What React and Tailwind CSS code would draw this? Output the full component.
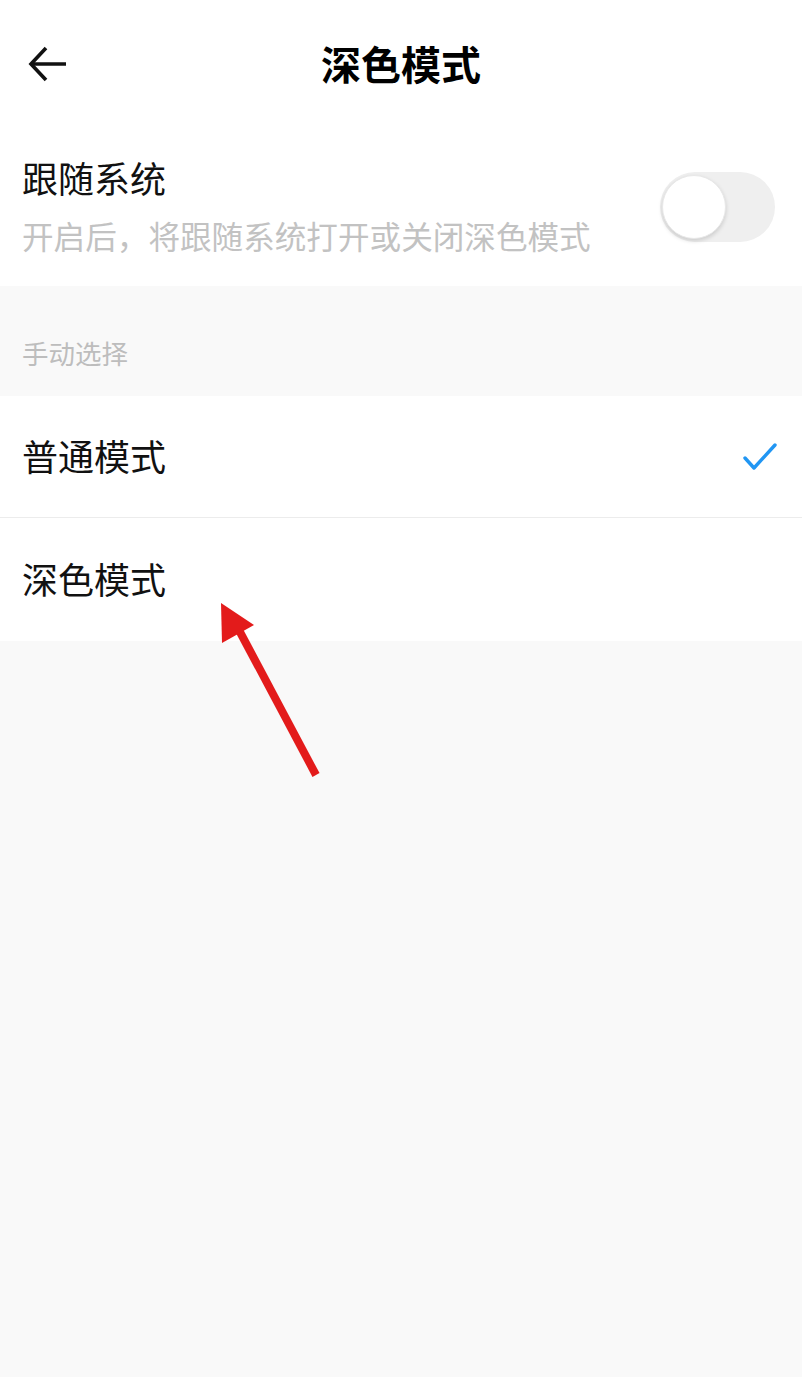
import React from "react";

export default function App() {
  return (
    <div
      className="relative w-[802px] h-[1377px] bg-[#f9f9f9] overflow-hidden"
      style={{ fontFamily: '"Noto Sans CJK SC", "Noto Sans", sans-serif' }}
    >
      {/* Header */}
      <div className="relative h-[130px] bg-white flex items-center justify-center">
        <svg
          className="absolute left-[28px] top-[46px]"
          width="40"
          height="36"
          viewBox="0 0 40 36"
          fill="none"
          stroke="#111"
          strokeWidth="3.6"
          strokeLinecap="butt"
          strokeLinejoin="miter"
        >
          <path d="M38 18 H3" />
          <path d="M18 2 L3 18 L18 34" />
        </svg>
        <div className="text-[40px] font-bold text-black leading-none -mt-[4px]">深色模式</div>
      </div>

      {/* Follow system */}
      <div className="h-[156px] bg-white flex items-center justify-between pl-[22px] pr-[27px]">
        <div className="flex flex-col -mt-[6px]">
          <div className="text-[36px] leading-[44px] text-[#111]">跟随系统</div>
          <div className="text-[31.6px] leading-[40px] text-[#c2c2c2] mt-[16px]">
            开启后，将跟随系统打开或关闭深色模式
          </div>
        </div>
        <div className="relative w-[115px] h-[70px] rounded-full bg-[#efefef] -mt-[2px]">
          <div className="absolute left-[2px] top-[3px] w-[64px] h-[64px] rounded-full bg-white shadow-[0_2px_4px_rgba(0,0,0,0.15)] border border-[#e8e8e8]" />
        </div>
      </div>

      {/* Section label */}
      <div className="h-[110px] flex items-center pl-[22px] pt-[24px]">
        <div className="text-[26.5px] text-[#bdbdbd]">手动选择</div>
      </div>

      {/* Options */}
      <div className="bg-white">
        <div className="h-[122px] flex items-center justify-between pl-[22px] pr-[25px] border-b border-[#ececec]">
          <div className="text-[36px] text-[#111] -mt-[4px]">普通模式</div>
          <svg width="34" height="28" viewBox="0 0 34 28" fill="none" stroke="#2196f3" strokeWidth="3.4" strokeLinecap="round" strokeLinejoin="round">
            <path d="M2 15 L11 25 L32 2" />
          </svg>
        </div>
        <div className="h-[123px] flex items-center pl-[22px]">
          <div className="text-[36px] text-[#111] -mt-[4px]">深色模式</div>
        </div>
      </div>

      {/* Red annotation arrow */}
      <svg className="absolute left-0 top-0" width="802" height="1377" viewBox="0 0 802 1377">
        <line x1="316" y1="775" x2="240" y2="632" stroke="#e31b1b" strokeWidth="8" />
        <polygon points="221,603 222,643 254,625" fill="#e31b1b" />
      </svg>
    </div>
  );
}
